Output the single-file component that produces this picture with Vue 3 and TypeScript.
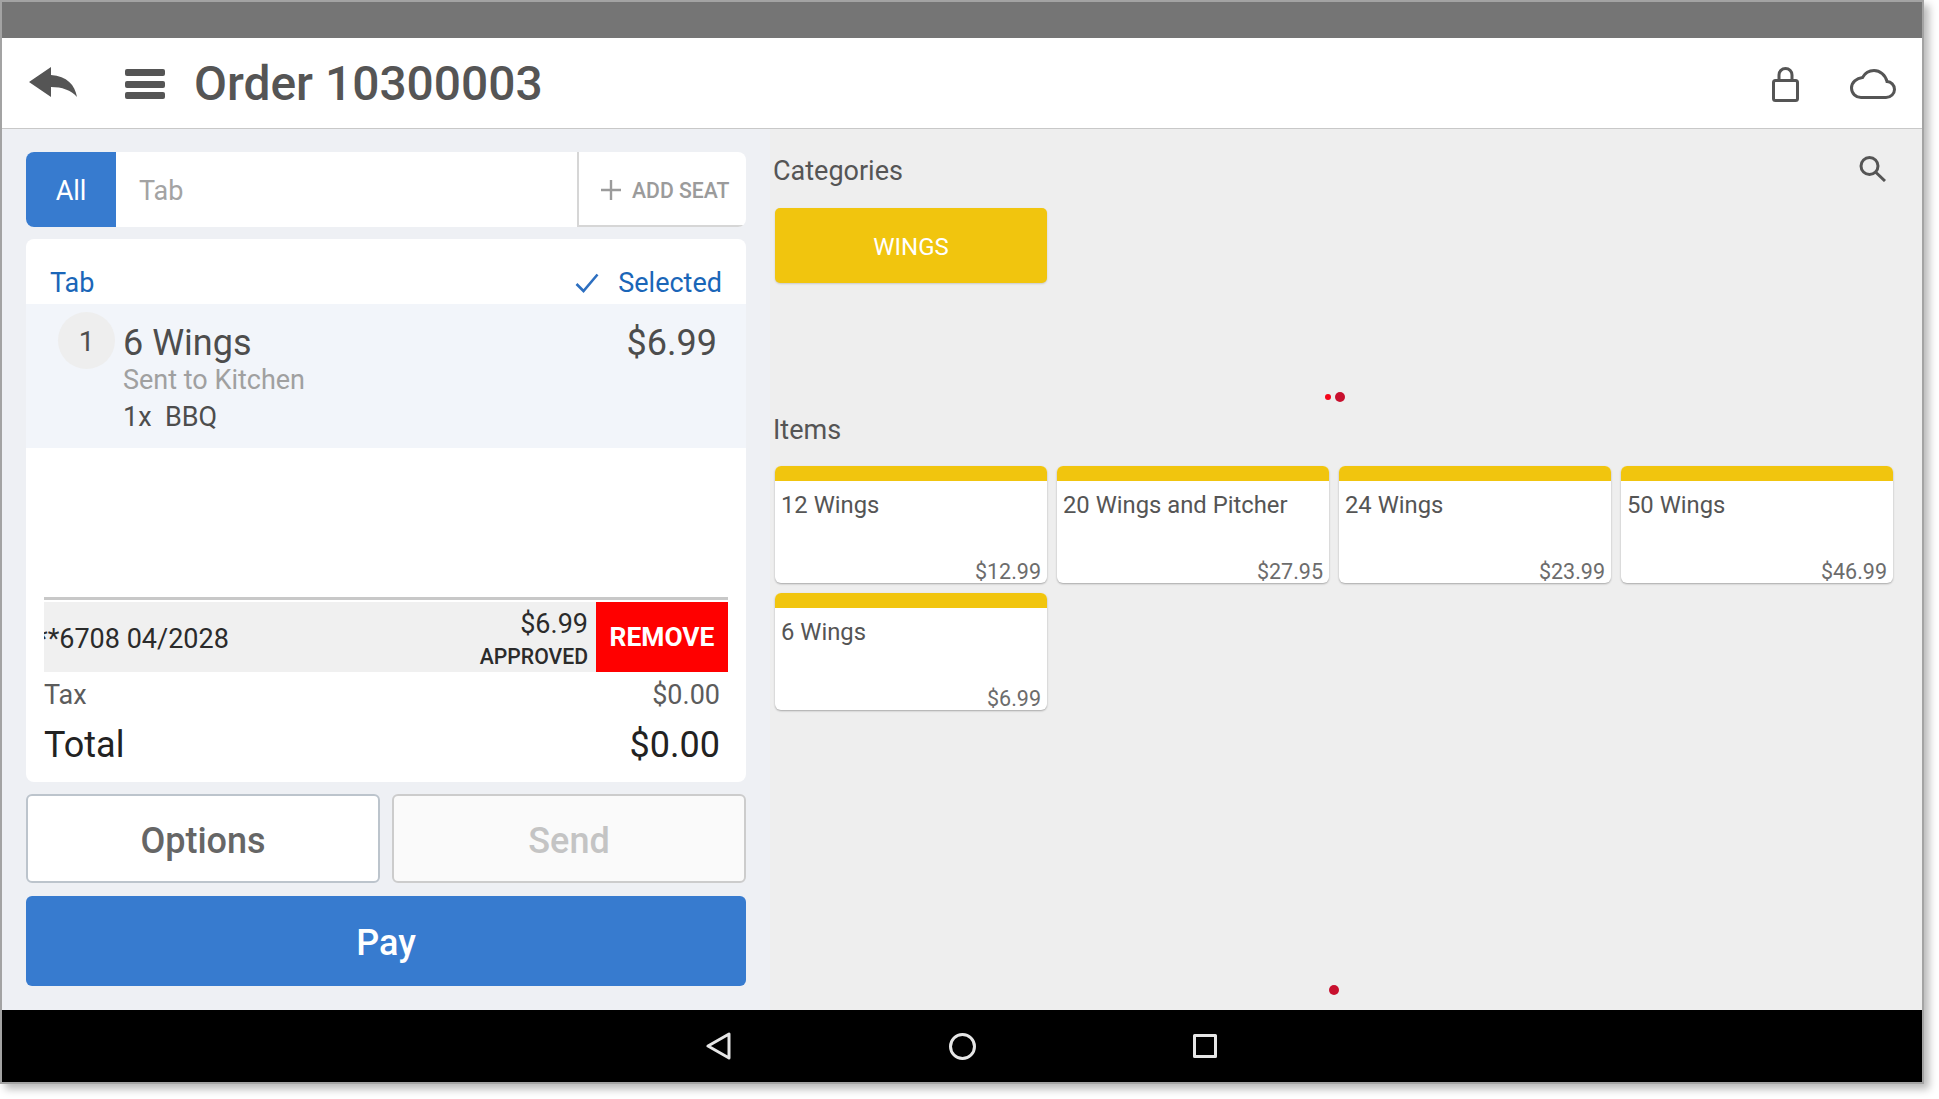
<script setup lang="ts">
interface Item { name: string; price: string }
const items: Item[] = [
  { name: '12 Wings', price: '$12.99' },
  { name: '20 Wings and Pitcher', price: '$27.95' },
  { name: '24 Wings', price: '$23.99' },
  { name: '50 Wings', price: '$46.99' },
  { name: '6 Wings', price: '$6.99' },
]
</script>

<template>
  <div class="page">
    <div class="device">
      <div class="status"></div>
      <header class="topbar">
        <svg class="back" viewBox="0 0 48 30"><path d="M0 15 L22 0 V8 C38 9 46 18 48 30 C42 23 33 20 22 20 V30 Z" fill="#555"/></svg>
        <div class="burger"><i></i><i></i><i></i></div>
        <h1 class="title">Order 10300003</h1>
        <div class="top-icons">
          <svg class="lock" viewBox="0 0 27 35" fill="none" stroke="#555" stroke-width="3"><rect x="1.500" y="13.500" width="24" height="20" rx="2"/><path d="M7 13 V8 a6.500 6.500 0 0 1 13 0 V13"/></svg>
          <svg class="cloud" viewBox="0 0 46 30" fill="none" stroke="#555" stroke-width="3"><path d="M11 28.500 H36 C41 28.500 44.500 24.500 44.500 20.500 C44.500 16 41 12.800 37 12.500 C35.500 6 30 1.500 24 1.500 C19 1.500 15 4 12.500 8.500 C6.500 9 1.500 13.500 1.500 19 C1.500 24.500 6 28.500 11 28.500 Z"/></svg>
        </div>
      </header>
      <main class="body">
        <section class="left">
          <div class="seats">
            <div class="seat-all">All</div>
            <div class="seat-tab">Tab</div>
            <div class="add-seat"><svg class="plus" viewBox="0 0 20 20"><path d="M10 0 V20 M0 10 H20" stroke="#9b9b9b" stroke-width="2.400"/></svg><span>ADD SEAT</span></div>
          </div>
          <div class="order">
            <div class="order-head">
              <span>Tab</span>
              <span class="selected"><svg class="check" viewBox="0 0 24 20" fill="none"><path d="M1.500 11 L8.500 18 L22.500 1.500" stroke="#2d6fc0" stroke-width="2.600"/></svg>Selected</span>
            </div>
            <div class="line">
              <div class="qty">1</div>
              <div class="line-info">
                <div class="line-name">6 Wings</div>
                <div class="line-sent">Sent to Kitchen</div>
                <div class="line-mod">1x&nbsp; BBQ</div>
              </div>
              <div class="line-price">$6.99</div>
            </div>
            <div class="spacer"></div>
            <div class="payment">
              <div class="card-no"><span class="card-text">**6708 04/2028</span></div>
              <div class="pay-state">
                <div class="pay-amt">$6.99</div>
                <div class="pay-ok">APPROVED</div>
              </div>
              <div class="remove">REMOVE</div>
            </div>
            <div class="tax"><span>Tax</span><span class="tax-val">$0.00</span></div>
            <div class="total"><span>Total</span><span class="total-val">$0.00</span></div>
          </div>
          <div class="actions">
            <button class="btn">Options</button>
            <button class="btn send">Send</button>
          </div>
          <button class="pay">Pay</button>
        </section>
        <section class="right">
          <div class="cat-head">
            <span class="label">Categories</span>
            <svg class="search" viewBox="0 0 27 26" fill="none" stroke="#555" stroke-width="3"><circle cx="10.500" cy="10" r="8.500"/><path d="M16.500 16 L26 25"/></svg>
          </div>
          <div class="cat-btn">WINGS</div>
          <div class="label items-label">Items</div>
          <div class="grid">
            <div v-for="it in items" :key="it.name" class="item">
              <div class="item-bar"></div>
              <div class="item-name">{{ it.name }}</div>
              <div class="item-price">{{ it.price }}</div>
            </div>
          </div>
          <i class="dot d1"></i>
          <i class="dot d2"></i>
          <i class="dot d3"></i>
        </section>
      </main>
      <footer class="nav">
        <svg class="nav-back" viewBox="0 0 25 28" fill="none" stroke="#e6e6e6" stroke-width="3" stroke-linejoin="round"><path d="M23 2 V26 L2 14 Z"/></svg>
        <svg class="nav-home" viewBox="0 0 27 27" fill="none" stroke="#e6e6e6" stroke-width="3"><circle cx="13.500" cy="13.500" r="12"/></svg>
        <svg class="nav-recent" viewBox="0 0 24 24" fill="none" stroke="#e6e6e6" stroke-width="3" stroke-linejoin="round"><rect x="1.500" y="1.500" width="21" height="21"/></svg>
      </footer>
    </div>
  </div>
</template>

<style>
html, body { margin: 0; background: #fff; }
</style>

<style scoped>
* { box-sizing: border-box; }
.page {
  width: 1939px;
  height: 1099px;
  overflow: hidden;
  background: #fff;
  font-family: Roboto, "Liberation Sans", sans-serif;
}
.device {
  width: 1924px;
  height: 1084px;
  border: 2px solid #a3a3a3;
  display: flex;
  flex-direction: column;
  box-shadow: 5px 5px 8px rgba(0,0,0,.28);
}
.status { height: 36px; background: #757575; flex: none; }
.topbar {
  height: 91px;
  flex: none;
  background: #fff;
  border-bottom: 1px solid #c8c8c8;
  display: flex;
  align-items: center;
  padding-left: 27px;
}
.back { width: 48px; height: 30px; margin-top: -2px; flex: none; }
.burger { width: 40px; height: 30px; margin-left: 48px; margin-top: 2px; display: flex; flex-direction: column; justify-content: space-between; flex: none; }
.burger i { display: block; height: 7px; background: #555; border-radius: 2px; }
.title {
  margin: 4px 0 0 29px;
  font-size: 47.900px;
  font-weight: 500;
  color: #555;
  line-height: 1;
}
.top-icons { margin-left: auto; display: flex; align-items: center; padding-right: 26px; padding-top: 2px; }
.lock { width: 27px; height: 35px; }
.cloud { width: 46px; height: 30px; margin-left: 51px; }
.body { flex: 1; display: flex; min-height: 0; }
.left {
  width: 768px;
  flex: none;
  background: #eef0f4;
  padding: 23px 24px 0;
  display: flex;
  flex-direction: column;
}
.seats {
  height: 75px;
  display: flex;
  background: #fff;
  border-radius: 8px;
  overflow: hidden;
  flex: none;
}
.seat-all {
  width: 90px;
  background: #377bcf;
  color: #fff;
  font-size: 27px;
  padding-top: 2px;
  display: flex;
  align-items: center;
  justify-content: center;
}
.seat-tab {
  flex: 1;
  padding-left: 23px;
  padding-top: 2px;
  font-size: 27px;
  color: #a3a3a3;
  display: flex;
  align-items: center;
}
.add-seat {
  width: 169px;
  border-left: 2px solid #d6d6d6;
  border-bottom: 2px solid #d6d6d6;
  display: flex;
  align-items: center;
  padding-left: 22px;
  padding-top: 3px;
  color: #9b9b9b;
  font-size: 21.200px;
  font-weight: 500;
  white-space: nowrap;
}
.plus { width: 20px; height: 20px; margin-right: 11px; flex: none; }
.order {
  height: 543px;
  margin-top: 12px;
  background: #fff;
  border-radius: 8px;
  overflow: hidden;
  display: flex;
  flex-direction: column;
  flex: none;
}
.order-head {
  height: 65px;
  flex: none;
  display: flex;
  justify-content: space-between;
  align-items: center;
  padding: 22px 24px 0;
  color: #1a66b8;
  font-size: 27px;
}
.selected { display: flex; align-items: center; }
.check { width: 24px; height: 20px; margin-right: 19px; margin-left: 1px; }
.line {
  height: 144px;
  flex: none;
  background: #f2f5fa;
  display: flex;
  padding: 8px 29px 0 32px;
  color: #4d4d4d;
}
.qty {
  width: 57px;
  height: 57px;
  border-radius: 50%;
  background: #eee;
  display: flex;
  align-items: center;
  justify-content: center;
  font-size: 28px;
  padding-top: 2px;
  flex: none;
}
.line-info { margin-left: 8px; flex: 1; }
.line-name { font-size: 36px; line-height: 44px; margin-top: 9px; }
.line-sent { font-size: 27px; line-height: 32px; margin-top: -1px; color: #a0a0a0; }
.line-mod { font-size: 27px; line-height: 32px; margin-top: 5px; }
.line-price { font-size: 36px; line-height: 44px; margin-top: 9px; }
.spacer { flex: 1; }
.payment {
  height: 75px;
  flex: none;
  margin: 0 18px;
  border-top: 3px solid #c8c8c8;
  padding-top: 2px;
  background-clip: content-box;
  background-color: #f0f0f0;
  display: flex;
  color: #2b2b2b;
}
.card-no {
  flex: 1;
  font-size: 27px;
  padding-top: 4px;
  display: flex;
  align-items: center;
  overflow: hidden;
  white-space: nowrap;
}
.card-text { margin-left: -8px; }
.pay-state { text-align: right; padding-right: 8px; }
.pay-amt { font-size: 27px; line-height: 32px; margin-top: 6px; }
.pay-ok { font-size: 21.200px; line-height: 24px; margin-top: 5px; font-weight: 500; }
.remove {
  width: 132px;
  background: #f00;
  color: #fff;
  font-size: 26.400px;
  font-weight: 700;
  display: flex;
  align-items: center;
  justify-content: center;
}
.tax {
  flex: none;
  margin-top: 5px;
  height: 36px;
  padding: 0 26px 0 18px;
  display: flex;
  justify-content: space-between;
  align-items: center;
  font-size: 27px;
  color: #5c5c5c;
}
.total {
  flex: none;
  margin-top: 8px;
  height: 48px;
  margin-bottom: 13px;
  padding: 0 26px 0 18px;
  display: flex;
  justify-content: space-between;
  align-items: center;
  font-size: 36px;
  color: #222;
}
.actions { display: flex; gap: 12px; margin-top: 12px; flex: none; }
.btn {
  flex: 1;
  height: 89px;
  border-radius: 6px;
  border: 2px solid #bcc4cc;
  background: #fff;
  font: 500 36px Roboto, "Liberation Sans", sans-serif;
  color: #666;
  padding: 4px 0 0;
}
.send { background: #fafafa; border-color: #ccc; color: #c4c4c4; }
.pay {
  margin-top: 13px;
  height: 90px;
  flex: none;
  border: 0;
  border-radius: 6px;
  background: #377bcf;
  color: #fff;
  font: 500 36px Roboto, "Liberation Sans", sans-serif;
  padding: 3px 0 0;
}
.right {
  flex: 1;
  position: relative;
  background: #eee;
  padding: 0 22px 0 3px;
}
.cat-head {
  height: 79px;
  display: flex;
  justify-content: space-between;
  padding-top: 26px;
}
.label { font-size: 27px; color: #555; line-height: 32px; }
.search { width: 27px; height: 26px; margin-right: 14px; margin-top: 1px; }
.cat-btn {
  width: 272px;
  height: 75px;
  background: #f1c50e;
  border-radius: 5px;
  color: #fff;
  font-size: 24px;
  padding-top: 2px;
  display: flex;
  align-items: center;
  justify-content: center;
  box-shadow: 0 1px 2px rgba(0,0,0,.15);
  margin-left: 2px;
}
.items-label { margin-top: 131px; }
.grid {
  display: grid;
  grid-template-columns: repeat(4, 272px);
  gap: 10px;
  margin-top: 20px;
  margin-left: 2px;
}
.item {
  height: 117px;
  background: #fff;
  border-radius: 6px;
  overflow: hidden;
  box-shadow: 0 1px 2px rgba(0,0,0,.3);
  display: flex;
  flex-direction: column;
}
.item-bar { height: 15px; background: #f1c50e; flex: none; }
.item-name { font-size: 23.800px; color: #555; padding: 8px 6px 0; line-height: 32px; }
.item-price { margin-top: auto; text-align: right; padding: 0 6px; font-size: 21.500px; color: #6c6c6c; line-height: 22px; }
.dot { position: absolute; border-radius: 50%; display: block; }
.d1 { left: 555px; top: 265px; width: 6px; height: 6px; background: #f5061a; }
.d2 { left: 565px; top: 263px; width: 10px; height: 10px; background: #c8102e; }
.d3 { left: 559px; top: 856px; width: 10px; height: 10px; background: #c8102e; }
.nav {
  height: 72px;
  flex: none;
  background: #000;
  display: flex;
  align-items: center;
  padding-left: 704px;
}
.nav-back { width: 25px; height: 28px; }
.nav-home { width: 27px; height: 27px; margin-left: 218px; }
.nav-recent { width: 24px; height: 24px; margin-left: 217px; }
</style>
